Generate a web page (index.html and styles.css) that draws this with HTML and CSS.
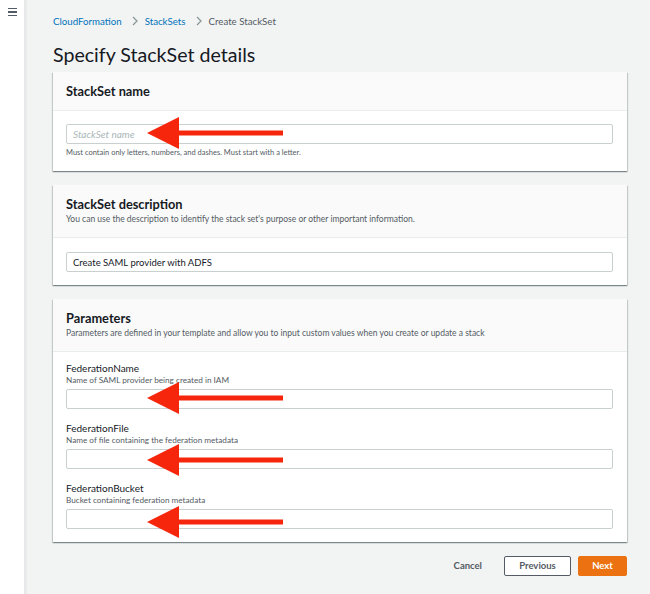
FILE: index.html
```html
<!DOCTYPE html>
<html lang="en">
<head>
<meta charset="utf-8">
<title>Specify StackSet details</title>
<link rel="stylesheet" href="styles.css">
</head>
<body>
<div class="app">
  <aside class="sidenav">
    <button class="menu-btn" aria-label="Open navigation">
      <span></span><span></span><span></span>
    </button>
  </aside>
  <main class="content">
    <nav class="breadcrumbs">
      <a href="#">CloudFormation</a>
      <svg class="chev" viewBox="0 0 6 10" width="6" height="10"><path d="M1 1l4 4-4 4" fill="none" stroke="#879596" stroke-width="1.2"/></svg>
      <a href="#">StackSets</a>
      <svg class="chev" viewBox="0 0 6 10" width="6" height="10"><path d="M1 1l4 4-4 4" fill="none" stroke="#879596" stroke-width="1.2"/></svg>
      <span class="current">Create StackSet</span>
    </nav>
    <h1 class="page-title">Specify StackSet details</h1>

    <section class="card card-first">
      <header class="card-header">
        <h2 class="card-title">StackSet name</h2>
      </header>
      <div class="card-body">
        <div class="input"><span class="placeholder">StackSet name</span></div>
        <p class="hint">Must contain only letters, numbers, and dashes. Must start with a letter.</p>
      </div>
    </section>

    <section class="card">
      <header class="card-header">
        <h2 class="card-title">StackSet description</h2>
        <p class="card-desc">You can use the description to identify the stack set's purpose or other important information.</p>
      </header>
      <div class="card-body card-body-desc">
        <div class="input"><span class="value">Create SAML provider with ADFS</span></div>
      </div>
    </section>

    <section class="card">
      <header class="card-header">
        <h2 class="card-title">Parameters</h2>
        <p class="card-desc">Parameters are defined in your template and allow you to input custom values when you create or update a stack</p>
      </header>
      <div class="card-body card-body-params">
        <div class="field">
          <div class="field-label">FederationName</div>
          <div class="field-desc">Name of SAML provider being created in IAM</div>
          <div class="input"></div>
        </div>
        <div class="field">
          <div class="field-label">FederationFile</div>
          <div class="field-desc">Name of file containing the federation metadata</div>
          <div class="input"></div>
        </div>
        <div class="field">
          <div class="field-label">FederationBucket</div>
          <div class="field-desc">Bucket containing federation metadata</div>
          <div class="input"></div>
        </div>
      </div>
    </section>

    <div class="actions">
      <button class="btn btn-link">Cancel</button>
      <button class="btn btn-normal">Previous</button>
      <button class="btn btn-primary">Next</button>
    </div>
  </main>
</div>

<svg class="annotations" viewBox="0 0 650 594" width="650" height="594" aria-hidden="true">
  <g fill="#f5260c">
    <polygon points="147,133 179,117 179,130.5 283,130.5 283,135.5 179,135.5 179,149"/>
    <polygon points="147,398 179,382 179,395.5 283,395.5 283,400.5 179,400.5 179,414"/>
    <polygon points="147,460 179,444 179,457.5 283,457.5 283,462.5 179,462.5 179,476"/>
    <polygon points="147,522 179,506 179,519.5 283,519.5 283,524.5 179,524.5 179,538"/>
  </g>
</svg>
</body>
</html>
```

FILE: styles.css
```css
* { box-sizing: border-box; }

html, body {
  margin: 0;
  padding: 0;
  width: 650px;
  height: 594px;
  overflow: hidden;
}

body {
  position: relative;
  background: #f2f3f3;
  color: #16191f;
  font-family: Lato, "Open Sans", "Liberation Sans", sans-serif;
}

.app {
  display: flex;
  height: 594px;
}

.sidenav {
  width: 25px;
  flex: 0 0 25px;
  background: #ffffff;
  border-right: 1px solid #e6e9e9;
  box-shadow: 1px 0 2px rgba(0, 28, 36, 0.08);
  padding: 8px 0 0 7px;
}

.menu-btn {
  display: flex;
  flex-direction: column;
  gap: 2px;
  width: 11px;
  padding: 0 1px;
  margin: 0;
  border: 0;
  background: transparent;
}

.menu-btn span {
  display: block;
  width: 9px;
  height: 1.4px;
  background: #545b64;
}

.content {
  flex: 1;
  padding: 14px 23px 0 28px;
}

.breadcrumbs {
  display: flex;
  align-items: center;
  height: 14px;
  font-size: 9.7px;
  line-height: 14px;
}

.breadcrumbs a {
  color: #0073bb;
  text-decoration: none;
}

.breadcrumbs .chev {
  margin: 0 7px 0 10px;
}

.breadcrumbs .current {
  color: #545b64;
}

.page-title {
  margin: 12px 0 2px;
  font-size: 19.6px;
  line-height: 30px;
  font-weight: 400;
  color: #16191f;
}

.card {
  background: #ffffff;
  margin-top: 14px;
  box-shadow: 0 1px 1px 0 rgba(0, 28, 36, 0.3), 1px 1px 1px 0 rgba(0, 28, 36, 0.15), -1px 1px 1px 0 rgba(0, 28, 36, 0.15);
}

.card-first {
  margin-top: 0;
}

.card-header {
  background: #fafafa;
  border-bottom: 1px solid #eaeded;
  padding: 11px 13px;
}

.card-title {
  margin: 0;
  font-size: 12.8px;
  line-height: 16px;
  font-weight: 700;
  color: #16191f;
}

.card-desc {
  margin: 0;
  font-size: 8.5px;
  line-height: 14px;
  color: #545b64;
}

.card-body {
  padding: 13px 14px 13px 13px;
}

.card-body-desc {
  padding: 14px 14px 13px 13px;
}

.card-body-params {
  padding: 10px 14px 13px 13px;
  display: flex;
  flex-direction: column;
  gap: 13px;
}

.input {
  height: 20px;
  background: #ffffff;
  border: 1px solid #c8d0d0;
  border-radius: 2px;
  display: flex;
  align-items: center;
  padding: 0 6px;
  font-size: 9.5px;
}

.placeholder {
  color: #aab7b8;
  font-style: italic;
  font-size: 10px;
}

.value {
  color: #16191f;
}

.hint {
  margin: 4px 0 0;
  font-size: 7.5px;
  line-height: 10px;
  color: #545b64;
}

.field-label {
  font-size: 10px;
  line-height: 13px;
  color: #16191f;
}

.field-desc {
  font-size: 8.2px;
  line-height: 11px;
  color: #545b64;
  margin-bottom: 3px;
}

.actions {
  display: flex;
  justify-content: flex-end;
  align-items: center;
  gap: 7px;
  margin-top: 14px;
}

.btn {
  height: 20px;
  margin: 0;
  font-family: inherit;
  font-size: 9.5px;
  font-weight: 700;
  border-radius: 2px;
  line-height: 18px;
  cursor: pointer;
}

.btn-link {
  background: transparent;
  border: 1px solid transparent;
  color: #545b64;
  padding: 0 13px;
  margin-right: 1px;
}

.btn-normal {
  background: #ffffff;
  border: 1px solid #545b64;
  color: #545b64;
  width: 67px;
  padding: 0;
}

.btn-primary {
  background: #ec7211;
  border: 1px solid #ec7211;
  color: #ffffff;
  width: 49px;
  padding: 0;
}

.annotations {
  position: absolute;
  left: 0;
  top: 0;
  pointer-events: none;
}
```
